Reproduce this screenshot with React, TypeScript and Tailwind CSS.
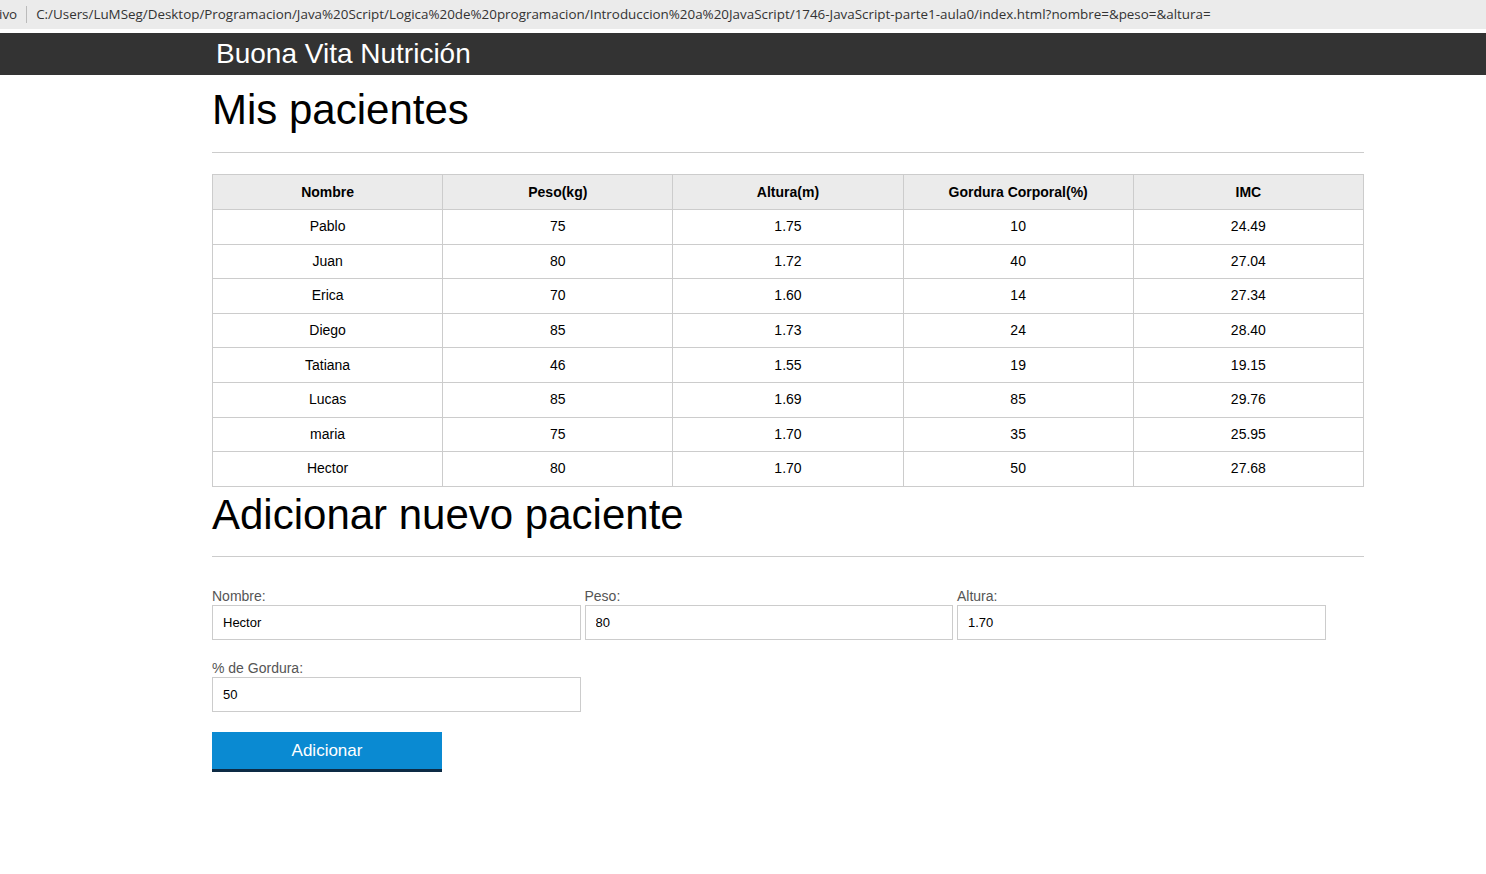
const pacientes = [
  ["Pablo", "75", "1.75", "10", "24.49"],
  ["Juan", "80", "1.72", "40", "27.04"],
  ["Erica", "70", "1.60", "14", "27.34"],
  ["Diego", "85", "1.73", "24", "28.40"],
  ["Tatiana", "46", "1.55", "19", "19.15"],
  ["Lucas", "85", "1.69", "85", "29.76"],
  ["maria", "75", "1.70", "35", "25.95"],
  ["Hector", "80", "1.70", "50", "27.68"],
]

const columnas = ["Nombre", "Peso(kg)", "Altura(m)", "Gordura Corporal(%)", "IMC"]

function Campo({ label, value }: { label: string; value: string }) {
  return (
    <div className="flex w-[368.5px] flex-col">
      <label className="h-[18px] text-[14px] leading-[18px] text-[#555]">{label}</label>
      <input
        readOnly
        value={value}
        className="h-[35px] w-full border border-[#ccc] px-[10px] text-[13px] text-black outline-none"
      />
    </div>
  )
}

export default function App() {
  return (
    <div className="min-h-screen bg-white font-['Liberation_Sans',Arial,sans-serif] text-black">
      <div className="flex h-[29px] items-center bg-[#ebebeb] font-['Open_Sans','Noto_Sans',sans-serif] text-[13.4px] text-[#333]">
        <span className="-ml-[1px]">ivo</span>
        <span className="mx-[9px] h-[17px] w-px bg-[#bbb]" />
        <span>C:/Users/LuMSeg/Desktop/Programacion/Java%20Script/Logica%20de%20programacion/Introduccion%20a%20JavaScript/1746-JavaScript-parte1-aula0/index.html?nombre=&amp;peso=&amp;altura=</span>
      </div>
      <div className="h-[4px]" />
      <header className="h-[42px] bg-[#333]">
        <div className="ml-[212px] pl-[4px] text-[28px] leading-[42px] text-white">Buona Vita Nutrición</div>
      </header>

      <main className="ml-[212px] w-[1152px]">
        <h1 className="mt-[9px] text-[42px] leading-[52px]">Mis pacientes</h1>
        <hr className="mt-[16px] border-[#ccc]" />

        <table className="mt-[21px] w-[1152px] table-fixed border-collapse text-[14px]">
          <thead>
            <tr className="h-[35px] bg-[#ebebeb]">
              {columnas.map((c) => (
                <th key={c} className="border border-[#ccc] font-bold">
                  {c}
                </th>
              ))}
            </tr>
          </thead>
          <tbody>
            {pacientes.map((p) => (
              <tr key={p[0]} className="h-[34.6px]">
                {p.map((v, i) => (
                  <td key={i} className="border border-[#ccc] text-center">
                    {v}
                  </td>
                ))}
              </tr>
            ))}
          </tbody>
        </table>

        <h2 className="mt-[2px] text-[42px] leading-[52px]">Adicionar nuevo paciente</h2>
        <hr className="mt-[15px] border-[#ccc]" />

        <form className="mt-[30px] flex flex-col">
          <div className="flex gap-[4px]">
            <Campo label="Nombre:" value="Hector" />
            <Campo label="Peso:" value="80" />
            <Campo label="Altura:" value="1.70" />
          </div>
          <div className="mt-[19px] flex">
            <Campo label="% de Gordura:" value="50" />
          </div>
          <button
            type="button"
            className="mt-[20px] h-[40px] w-[230px] border-b-[3px] border-[#0d2b45] bg-[#0a8ad2] text-[17px] text-white"
          >
            Adicionar
          </button>
        </form>
      </main>
    </div>
  )
}
